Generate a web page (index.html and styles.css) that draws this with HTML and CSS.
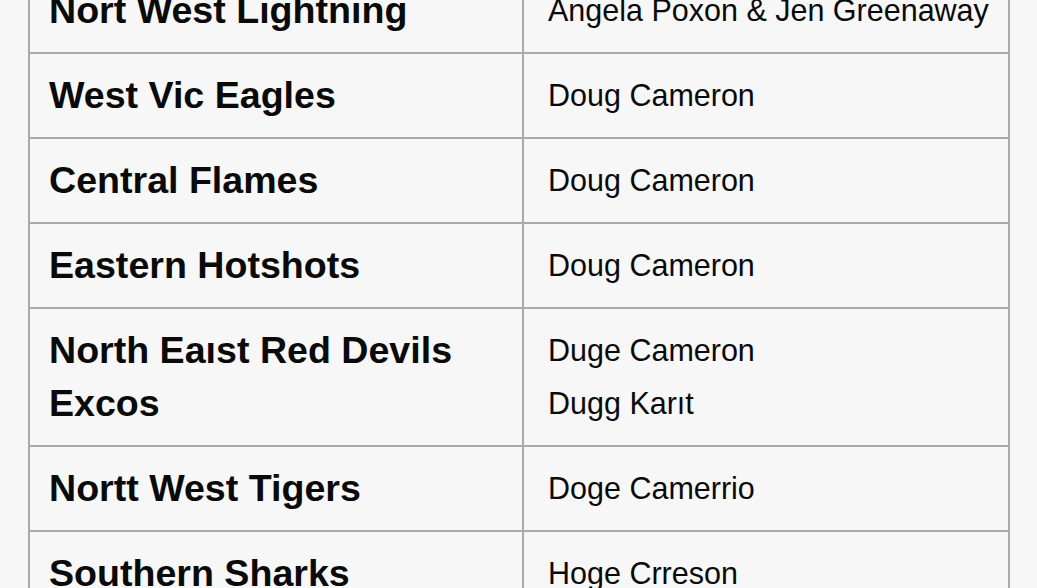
FILE: index.html
```html
<html>
<head>
    <title>Club Contacts</title>
    <link rel="stylesheet" href="styles.css">
</head>
<body>
    <table class="clubs">
        <colgroup>
            <col class="col-club">
            <col class="col-contact">
        </colgroup>
        <tr>
            <td class="club">Nort West Lightning</td>
            <td class="contact">Angela Poxon &amp; Jen Greenaway</td>
        </tr>
        <tr>
            <td class="club">West Vic Eagles</td>
            <td class="contact">Doug Cameron</td>
        </tr>
        <tr>
            <td class="club">Central Flames</td>
            <td class="contact">Doug Cameron</td>
        </tr>
        <tr>
            <td class="club">Eastern Hotshots</td>
            <td class="contact">Doug Cameron</td>
        </tr>
        <tr>
            <td class="club">North Eaıst Red Devils<br>Excos</td>
            <td class="contact">Duge Cameron<br>Dugg Kar&#x0131;t</td>
        </tr>
        <tr>
            <td class="club">Nortt West Tigers</td>
            <td class="contact">Doge Camerrio</td>
        </tr>
        <tr>
            <td class="club">Southern Sharks</td>
            <td class="contact">Hoge Crreson</td>
        </tr>
    </table>
</body>
</html>
```

FILE: styles.css
```css
body {
    margin: 0;
    background-color: #f6f6f6;
    font-family: "Liberation Sans", Arial, sans-serif;
    color: #0a0a0a;
    overflow: hidden;
}
.clubs {
    border-collapse: collapse;
    table-layout: fixed;
    margin-top: -33px;
    margin-left: 28px;
    width: 980px;
    background-color: #f7f7f7;
}
.col-club {
    width: 494px;
}
.col-contact {
    width: 486px;
}
.clubs td {
    border: 2px solid #aaa;
    padding: 15px 20px;
    line-height: 53px;
    vertical-align: middle;
    white-space: nowrap;
}
.clubs .club {
    font-size: 37.6px;
    font-weight: bold;
    padding-left: 19px;
}
.clubs .contact {
    font-size: 30.5px;
    padding-left: 24px;
}
```
